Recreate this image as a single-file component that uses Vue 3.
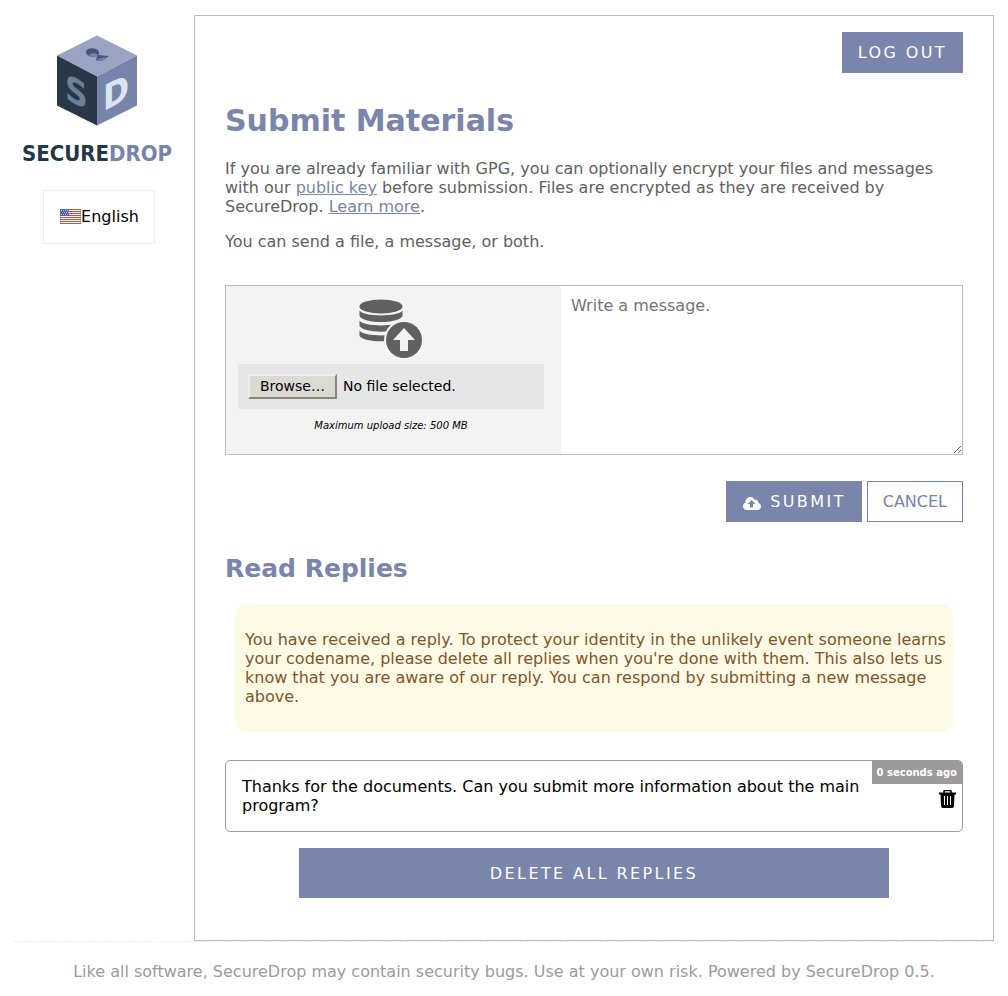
<script setup>
import { ref } from 'vue'

const message = ref('')
const fileName = ref('No file selected.')
const replies = ref([
  { id: 1, age: '0 seconds ago', text: 'Thanks for the documents. Can you submit more information about the main program?' }
])
const stripes = [0, 2, 4, 6, 8, 10, 12, 14]

function pickFile(event) {
  const file = event.target.files[0]
  fileName.value = file ? file.name : 'No file selected.'
}
</script>

<template>
  <div class="page">
    <div class="columns">
      <header class="side">
        <a class="logo" href="#" aria-label="SecureDrop home">
          <svg class="cube" viewBox="0 0 80 90" aria-hidden="true">
            <path fill="#98a4c1" d="M40 0 80 20 40 41 0 20z" />
            <path fill="#283848" d="M0 20 40 41V90L0 70z" />
            <path fill="#7683aa" d="M80 20 40 41V90L80 70z" />
            <path fill="#46557c" d="M29 16.500C29 13 35 12 39 13.500C42 14.500 42.500 17 41.500 19.500L52 20.500 45 25.500 39 25 40 21.500C34 22 29 20 29 16.500z" />
            <path fill="#7481aa" d="M32 20C33 17.500 38 17 40.500 19.500L40 21.500C37 21.800 34 21.200 32 20zM42 23 47 22 49 22.500 45 25.500 40 25z" />
            <text class="face" fill="#6e8097" transform="translate(8 63) skewY(27)">S</text>
            <text class="face" fill="#dce3ef" transform="translate(46 76) skewY(-27)">D</text>
          </svg>
          <span class="wordmark">SECURE<span class="drop">DROP</span></span>
        </a>
        <button class="language" type="button">
          <svg class="flag" viewBox="0 0 21 15" aria-hidden="true">
            <rect width="21" height="15" rx="1" fill="#fff" />
            <rect v-for="y in stripes" :key="y" :y="y" width="21" height="1" fill="#dc4444" />
            <rect width="9" height="7" fill="#4660b0" />
            <path stroke="#b9c5ea" stroke-dasharray="1 1" d="M1 1.500h8M2 3.500h7M1 5.500h8" />
            <rect x=".5" y=".5" width="20" height="14" rx="1" fill="none" stroke="#777" stroke-opacity=".45" />
          </svg>English
        </button>
      </header>

      <main class="content">
        <div class="top">
          <button class="btn" type="button">LOG OUT</button>
        </div>
        <h1>Submit Materials</h1>
        <p>
          If you are already familiar with GPG, you can optionally encrypt your files and messages with our
          <a href="#">public key</a> before submission. Files are encrypted as they are received by SecureDrop.
          <a href="#">Learn more</a>.
        </p>
        <p>You can send a file, a message, or both.</p>

        <form @submit.prevent>
          <div class="snippet">
            <div class="upload">
              <svg class="database" viewBox="0 0 64 60" aria-hidden="true">
                <g fill="#606060">
                  <ellipse cx="22" cy="7.500" rx="21.500" ry="7" />
                  <path d="M.5 11.500C5 18 39 18 43.500 11.500V17C39 25 5 25 .5 17z" />
                  <path d="M.5 21.500C5 28 39 28 43.500 21.500V27C39 34.500 5 34.500 .5 27z" />
                  <path d="M.5 31.500C5 38 39 38 43.500 31.500V37C39 44 5 44 .5 37z" />
                </g>
                <circle cx="45" cy="41" r="20" fill="#f3f3f3" />
                <circle cx="45" cy="41" r="18" fill="#606060" />
                <path fill="#f3f3f3" d="M45 29 56 41H49V52H41V41H34z" />
              </svg>
              <div class="file-row">
                <input id="file" class="file-input" type="file" @change="pickFile" />
                <label class="browse" for="file">Browse…</label>
                <span>{{ fileName }}</span>
              </div>
              <em class="limit">Maximum upload size: 500 MB</em>
            </div>
            <textarea v-model="message" aria-label="Message" placeholder="Write a message."></textarea>
          </div>
          <div class="actions">
            <button class="btn" type="submit">
              <svg class="cloud" viewBox="0 0 18 13" aria-hidden="true">
                <path fill="#fff" d="M4 13C1.500 13 0 11.300 0 9.200C0 7.500 1 6.200 2.400 5.700C2 2.500 4.300 0 7.200 0C9.500 0 11 1.200 11.800 3C14 2.300 15.700 4 15.300 6C17 6.500 18 7.800 18 9.500C18 11.500 16.500 13 14.500 13z" />
                <path fill="#7985ab" d="M8.500 3 12.500 7H10V10.500H7V7H4.500z" />
              </svg>SUBMIT
            </button>
            <a class="cancel" href="#">CANCEL</a>
          </div>
        </form>

        <h2>Read Replies</h2>
        <div class="notice">
          You have received a reply. To protect your identity in the unlikely event someone learns your codename,
          please delete all replies when you're done with them. This also lets us know that you are aware of our reply.
          You can respond by submitting a new message above.
        </div>
        <article v-for="reply in replies" :key="reply.id" class="reply">
          <div class="reply-text">{{ reply.text }}</div>
          <div class="reply-side">
            <time class="age">{{ reply.age }}</time>
            <button class="trash" type="button" aria-label="Delete reply">
              <svg viewBox="0 0 17 18" aria-hidden="true">
                <path d="M5 3V1.500Q5 .5 6 .5H11Q12 .5 12 1.500V3" fill="none" stroke="#000" stroke-width="1.500" />
                <path d="M0 2.500H17V4.500H15.500L15 16Q15 18 13 18H4Q2 18 2 16L1.500 4.500H0z" />
                <path d="M5.500 6V15M8.500 6V15M11.500 6V15" stroke="#fff" />
              </svg>
            </button>
          </div>
        </article>
        <button class="btn delete-all" type="button">DELETE ALL REPLIES</button>
      </main>
    </div>
    <footer>Like all software, SecureDrop may contain security bugs. Use at your own risk. Powered by SecureDrop 0.5.</footer>
  </div>
</template>

<style>
body {
  background: #fff;
}
</style>

<style scoped>
.page {
  padding: 15px 14px 0;
  font: 16px/19px "DejaVu Sans", sans-serif;
  color: #606060;
}
.page * {
  box-sizing: border-box;
}
button,
textarea {
  font: inherit;
}
.columns {
  display: flex;
}
.side {
  flex: 0 0 180px;
  min-width: 0;
  display: flex;
  flex-direction: column;
  align-items: center;
  padding: 20px 14px 0 0;
}
.logo {
  display: flex;
  flex-direction: column;
  align-items: center;
  text-decoration: none;
}
.cube {
  width: 80px;
  height: 91px;
}
.face {
  font: bold 35px "DejaVu Sans Condensed", "DejaVu Sans", sans-serif;
}
.wordmark {
  margin-top: 10px;
  font: bold 22px/36px "DejaVu Sans Condensed", "DejaVu Sans", sans-serif;
  color: #233748;
}
.drop {
  color: #7683aa;
}
.language {
  display: flex;
  align-items: center;
  margin: 18px 0 0 4px;
  padding: 0 15px 2px 16px;
  height: 54px;
  border: 1px solid #eee;
  background: #fff;
  color: #000;
}
.flag {
  width: 21px;
  height: 15px;
}
.content {
  flex: 1;
  min-width: 0;
  padding: 16px 30px 42px;
  border: 1px solid #bbb;
}
.top,
.actions {
  display: flex;
  justify-content: flex-end;
  gap: 5px;
}
.btn {
  display: flex;
  align-items: center;
  justify-content: center;
  padding: 11px 16px;
  border: 0;
  background: #7985ab;
  color: #fff;
  letter-spacing: 0.15em;
}
h1 {
  margin: 30px 0 21px;
  font-size: 30px;
  line-height: 35px;
  color: #7985ab;
}
h2 {
  margin: 32px 0 21px;
  font-size: 25px;
  line-height: 29px;
  color: #7985ab;
}
p {
  margin: 0 0 16px;
}
p a {
  color: #7683aa;
}
.snippet {
  display: flex;
  margin-top: 34px;
  border: 1px solid #bbb;
}
.upload {
  flex: 0 0 335px;
  display: flex;
  flex-direction: column;
  align-items: center;
  padding: 13px 17px 0 12px;
  background: #f3f3f3;
}
.database {
  width: 64px;
  height: 60px;
}
.file-row {
  align-self: stretch;
  display: flex;
  align-items: center;
  gap: 6px;
  margin-top: 5px;
  padding: 10px;
  background: #e6e6e6;
  color: #000;
  font-size: 14px;
  line-height: 17px;
}
.file-input {
  position: absolute;
  width: 1px;
  height: 1px;
  opacity: 0;
}
.browse {
  padding: 4px 10px;
  border: 2px solid;
  border-color: #eeeeea #8b8677 #8b8677 #eeeeea;
  background: #dcdad5;
  line-height: 13px;
}
.limit {
  margin-top: 11px;
  font-size: 10px;
  line-height: 12px;
  color: #000;
}
textarea {
  flex: 1;
  min-width: 0;
  height: 168px;
  padding: 10px;
  border: 0;
  outline: 0;
  background: #fff;
  resize: vertical;
}
textarea::placeholder {
  color: #757575;
}
.actions {
  margin-top: 26px;
}
.cloud {
  width: 18px;
  height: 13px;
  margin: 3px 9px 0 1px;
}
.cancel {
  padding: 10px 15px;
  border: 1px solid #7683aa;
  color: #7683aa;
  text-decoration: none;
}
.notice {
  margin: 0 10px 28px;
  padding: 26px 4px 26px 10px;
  border-radius: 10px;
  background: #fffae6;
  color: #80552b;
}
.reply {
  display: flex;
  border: 1px solid #9b9b9b;
  border-radius: 5px;
  overflow: hidden;
  color: #000;
}
.reply-text {
  flex: 1;
  padding: 16px 0 16px 16px;
}
.reply-side {
  display: flex;
  flex-direction: column;
  align-items: flex-end;
}
.age {
  padding: 5px;
  background: #9b9b9b;
  color: #fff;
  font-size: 10px;
  font-weight: bold;
  line-height: 13px;
}
.trash {
  display: flex;
  width: 17px;
  height: 18px;
  margin: 6px 6px 0 0;
  padding: 0;
  border: 0;
  background: none;
}
.delete-all {
  width: 80%;
  height: 50px;
  margin: 16px auto 0;
}
footer {
  padding: 20px 0 15px;
  border-top: 1px dashed #eee;
  text-align: center;
  color: #9b9b9b;
}
</style>
